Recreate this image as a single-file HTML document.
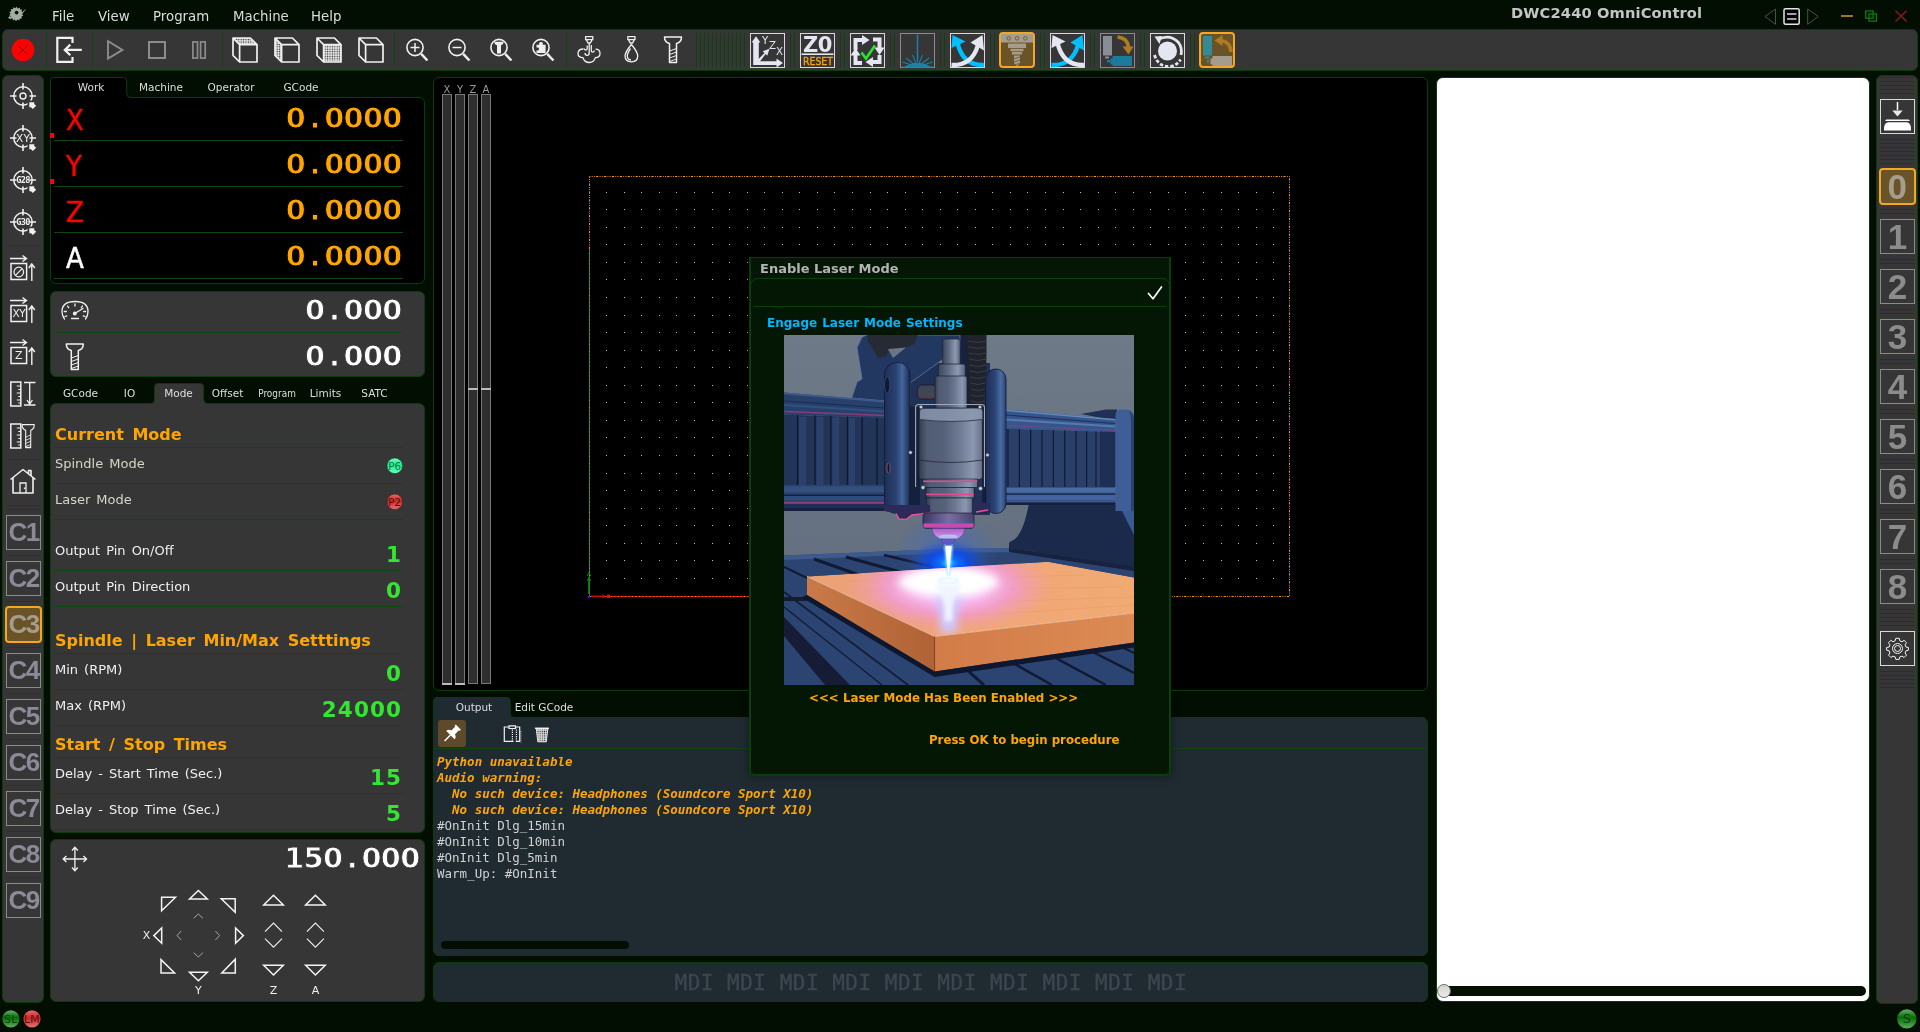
<!DOCTYPE html>
<html lang="en">
<head>
<meta charset="utf-8">
<title>DWC2440 OmniControl</title>
<style>
*{box-sizing:border-box;margin:0;padding:0}
html,body{width:1920px;height:1032px;overflow:hidden}
body{background:#020e02;font-family:"DejaVu Sans","Liberation Sans",sans-serif;color:#e6e6e6;position:relative;font-size:12px}
.abs{position:absolute}
.panel{position:absolute;background:#363636;border:1px solid #0c3c0c;border-radius:6px}
.black{background:#000}
.t{position:absolute;white-space:nowrap;line-height:1}
.menu{font-size:13.33px;color:#dcdcdc;top:9.5px}
.title{left:1511px;top:5.5px;font-size:14.67px;font-weight:bold;color:#c4c4c4;letter-spacing:.13px}
.tab{font-size:10.5px;color:#dedede;text-align:center}
.sep{position:absolute;height:1px;background:#0f460f}
.vsep{position:absolute;width:1px;background:#0f460f}
.hs{position:absolute;height:1px;background:#0c420c;left:1880px;width:34px}
.vs{position:absolute;width:1px;background:#0c420c;top:33px;height:34px}
.ib{position:absolute;width:35px;height:35px;border:1px solid #d8d8d8;background:#363636}
.ib.dim{border-color:#8a8a8a}
.ib.act{border:2px solid #f5a623;border-radius:4px;background:#6b5328;width:36px;height:36px}
.cb{position:absolute;left:6px;width:35px;height:35px;border:1px solid #8a8a8a;background:#363636;font-family:"Liberation Sans",sans-serif;font-weight:bold;font-size:26px;color:#8b8b97;text-align:center;line-height:33px;letter-spacing:-1.5px}
.cb.act{border:2px solid #f5a623;border-radius:4px;background:#6b5328;color:#a69c8c;left:5px;width:37px;height:37px;line-height:33px}
.nb{position:absolute;left:1880px;width:35px;height:35px;border:1px solid #8a8a8a;background:#363636;font-family:"Liberation Sans",sans-serif;font-weight:bold;font-size:35px;color:#8c8c8c;text-align:center;line-height:34px}
.nb.act{border:2px solid #f5a623;border-radius:4px;background:#6b5328;color:#a69c8c;left:1879px;width:36.5px;height:36.5px;line-height:33px}
.dro{font-weight:bold;font-size:28.8px;color:#ffa500;letter-spacing:-.7px;right:1518.4px;-webkit-text-stroke:.9px #000}
.dro i,.fd i,.jg i{font-style:normal;display:inline-block;text-align:center}
.dro i{width:19.2px}
.ax{font-size:29px;color:#ff0000;left:66px;font-stretch:condensed;-webkit-text-stroke:.45px currentColor}
.fd{font-weight:bold;font-size:28.8px;color:#fff;letter-spacing:-.7px;-webkit-text-stroke:.9px #363636}
.jg{font-weight:bold;font-size:28.8px;color:#fff;letter-spacing:-.7px;-webkit-text-stroke:.9px #363636}
.h{font-weight:bold;font-size:16px;color:#ffa500;left:55px;word-spacing:3px}
.l{font-size:13px;color:#f0f0f0;left:55px;word-spacing:1.9px}
.l.dimt{color:#d6d6c6}
.v{font-weight:bold;font-size:21.5px;color:#32e632;letter-spacing:1.1px}
.con{position:absolute;left:437px;top:753.8px;font-family:"DejaVu Sans Mono","Liberation Mono",monospace;font-size:12.5px;line-height:16px;white-space:pre;color:#d2d2d2}
.con b{color:#ffa500;font-style:oblique;font-weight:bold}
.mdi{font-family:"DejaVu Sans Mono","Liberation Mono",monospace;font-size:21px;color:#3d4650;left:674.5px;top:973px;letter-spacing:.5px;-webkit-text-stroke:.35px #3d4650}
svg{position:absolute;left:0;top:0;overflow:visible}
</style>
</head>
<body>
<div id="root" style="position:absolute;left:0;top:0;width:1920px;height:1032px;will-change:transform;transform:translateZ(0)">

<div class="t menu" style="left:52px">File</div>
<div class="t menu" style="left:98px">View</div>
<div class="t menu" style="left:153px">Program</div>
<div class="t menu" style="left:233px">Machine</div>
<div class="t menu" style="left:311px">Help</div>
<div class="t title">DWC2440 OmniControl</div>
<div class="panel" style="left:2px;top:29px;width:1916px;height:42px"></div>
<div class="panel" style="left:2px;top:75px;width:42px;height:928px"></div>
<div class="panel black" style="left:50px;top:97px;width:375px;height:187px;border-top-left-radius:0"></div>
<svg width="1920" height="1032"><path d="M50.5,99.0 V81.0 Q50.5,77.5 54.0,77.5 H123.2 Q126.7,77.5 126.7,81.0 V93.5 Q126.7,97.5 130.7,97.5 V99.1 H51.1 Z" fill="#000"/><path d="M50.5,99.0 V81.0 Q50.5,77.5 54.0,77.5 H123.2 Q126.7,77.5 126.7,81.0 V93.5 Q126.7,97.5 130.7,97.5" fill="none" stroke="#0c3c0c" stroke-width="1"/></svg>
<div class="t tab" style="left:51px;width:80px;top:82px">Work</div>
<div class="t tab" style="left:121px;width:80px;top:82px">Machine</div>
<div class="t tab" style="left:191px;width:80px;top:82px">Operator</div>
<div class="t tab" style="left:261px;width:80px;top:82px">GCode</div>
<div class="sep" style="left:54px;width:349px;top:140px"></div>
<div class="t ax" style="top:105.5px;color:#ff0000">X</div>
<div class="t dro" style="top:103.6px">0<i>.</i>0000</div>
<div class="sep" style="left:54px;width:349px;top:186px"></div>
<div class="t ax" style="top:151.5px;color:#ff0000">Y</div>
<div class="t dro" style="top:149.6px">0<i>.</i>0000</div>
<div class="sep" style="left:54px;width:349px;top:232px"></div>
<div class="t ax" style="top:197.5px;color:#ff0000">Z</div>
<div class="t dro" style="top:195.6px">0<i>.</i>0000</div>
<div class="sep" style="left:54px;width:349px;top:278px"></div>
<div class="t ax" style="top:243.5px;color:#ffffff">A</div>
<div class="t dro" style="top:241.6px">0<i>.</i>0000</div>
<div class="abs" style="left:50px;top:133px;width:4px;height:5px;background:#f00"></div>
<div class="abs" style="left:50px;top:179px;width:4px;height:5px;background:#f00"></div>
<div class="panel" style="left:50px;top:291px;width:375px;height:86px"></div>
<div class="sep" style="left:54px;width:349px;top:332px"></div>
<div class="t fd" style="right:1518.4px;top:296.1px">0<i style="width:19.2px">.</i>000</div>
<div class="t fd" style="right:1518.4px;top:342.1px">0<i style="width:19.2px">.</i>000</div>
<div class="panel" style="left:50px;top:403px;width:375px;height:430px"></div>
<svg width="1920" height="1032"><path d="M150.5,403.5 Q154.5,403.5 154.5,399.5 V387.0 Q154.5,383.5 158.0,383.5 H200.2 Q203.7,383.5 203.7,387.0 V399.5 Q203.7,403.5 207.7,403.5 V405.1 H150.5 Z" fill="#363636"/><path d="M150.5,403.5 Q154.5,403.5 154.5,399.5 V387.0 Q154.5,383.5 158.0,383.5 H200.2 Q203.7,383.5 203.7,387.0 V399.5 Q203.7,403.5 207.7,403.5" fill="none" stroke="#0c3c0c" stroke-width="1"/></svg>
<div class="t tab" style="left:40.5px;width:80px;top:388px">GCode</div>
<div class="t tab" style="left:89.5px;width:80px;top:388px">IO</div>
<div class="t tab" style="left:138.5px;width:80px;top:388px">Mode</div>
<div class="t tab" style="left:187.5px;width:80px;top:388px">Offset</div>
<div class="t tab" style="left:236.5px;width:80px;top:388px;transform:scaleX(.85)">Program</div>
<div class="t tab" style="left:285.5px;width:80px;top:388px">Limits</div>
<div class="t tab" style="left:334.5px;width:80px;top:388px">SATC</div>
<div class="t h" style="top:426.6px">Current Mode</div>
<div class="t h" style="top:632.6px">Spindle | Laser Min/Max Setttings</div>
<div class="t h" style="top:736.6px">Start / Stop Times</div>
<div class="sep" style="left:54px;width:349px;top:447px"></div>
<div class="sep" style="left:54px;width:349px;top:483px"></div>
<div class="sep" style="left:54px;width:349px;top:519px"></div>
<div class="sep" style="left:54px;width:349px;top:570px"></div>
<div class="sep" style="left:54px;width:349px;top:606px"></div>
<div class="sep" style="left:54px;width:349px;top:653px"></div>
<div class="sep" style="left:54px;width:349px;top:689px"></div>
<div class="sep" style="left:54px;width:349px;top:725px"></div>
<div class="sep" style="left:54px;width:349px;top:757px"></div>
<div class="sep" style="left:54px;width:349px;top:793px"></div>
<div class="sep" style="left:54px;width:349px;top:829px"></div>
<div class="t l dimt" style="top:457px">Spindle Mode</div>
<div class="t l dimt" style="top:493px">Laser Mode</div>
<div class="t l" style="top:544px">Output Pin On/Off</div>
<div class="t v" style="right:1517.9px;top:543.5px">1</div>
<div class="t l" style="top:580px">Output Pin Direction</div>
<div class="t v" style="right:1517.9px;top:579.5px">0</div>
<div class="t l" style="top:663px">Min (RPM)</div>
<div class="t v" style="right:1517.9px;top:662.5px">0</div>
<div class="t l" style="top:699px">Max (RPM)</div>
<div class="t v" style="right:1517.9px;top:698.5px">24000</div>
<div class="t l" style="top:767px">Delay - Start Time (Sec.)</div>
<div class="t v" style="right:1517.9px;top:766.5px">15</div>
<div class="t l" style="top:803px">Delay - Stop Time (Sec.)</div>
<div class="t v" style="right:1517.9px;top:802.5px">5</div>
<div class="panel" style="left:50px;top:839px;width:375px;height:163px"></div>
<div class="t jg" style="right:1500.5px;top:843.6px">150<i style="width:19.2px">.</i>000</div>
<div class="t" style="left:136.5px;width:20px;text-align:center;top:930.0px;font-size:11px;color:#f0f0f0">X</div>
<div class="t" style="left:188.3px;width:20px;text-align:center;top:985.0px;font-size:11px;color:#f0f0f0">Y</div>
<div class="t" style="left:263.5px;width:20px;text-align:center;top:985.0px;font-size:11px;color:#f0f0f0">Z</div>
<div class="t" style="left:305.4px;width:20px;text-align:center;top:985.0px;font-size:11px;color:#f0f0f0">A</div>
<div class="panel black" style="left:433px;top:77px;width:995px;height:614px"></div>
<div class="t" style="left:437px;width:20px;text-align:center;top:85px;font-size:10px;color:#9a9a9a">X</div>
<div class="t" style="left:450px;width:20px;text-align:center;top:85px;font-size:10px;color:#9a9a9a">Y</div>
<div class="t" style="left:463px;width:20px;text-align:center;top:85px;font-size:10px;color:#9a9a9a">Z</div>
<div class="t" style="left:476px;width:20px;text-align:center;top:85px;font-size:10px;color:#9a9a9a">A</div>
<svg width="1920" height="1032">
<g fill="#2e2e2e" stroke="#787878" stroke-width="1"><rect x="442.5" y="94.5" width="9" height="589"/><rect x="455.5" y="94.5" width="9" height="589"/><rect x="468.5" y="94.5" width="9" height="589"/><rect x="481.5" y="94.5" width="9" height="589"/></g>
<g fill="#bcbcbc"><rect x="442" y="683" width="10" height="2"/><rect x="455" y="683" width="10" height="2"/><rect x="468" y="388" width="10" height="2"/><rect x="481" y="388" width="10" height="2"/></g>
<path fill="#c2c2c2" shape-rendering="crispEdges" d="M606 578h1v1h-1zM624 578h1v1h-1zM641 578h1v1h-1zM659 578h1v1h-1zM676 578h1v1h-1zM694 578h1v1h-1zM712 578h1v1h-1zM729 578h1v1h-1zM747 578h1v1h-1zM1185 578h1v1h-1zM1203 578h1v1h-1zM1221 578h1v1h-1zM1238 578h1v1h-1zM1256 578h1v1h-1zM1273 578h1v1h-1zM606 560h1v1h-1zM624 560h1v1h-1zM641 560h1v1h-1zM659 560h1v1h-1zM676 560h1v1h-1zM694 560h1v1h-1zM712 560h1v1h-1zM729 560h1v1h-1zM747 560h1v1h-1zM1185 560h1v1h-1zM1203 560h1v1h-1zM1221 560h1v1h-1zM1238 560h1v1h-1zM1256 560h1v1h-1zM1273 560h1v1h-1zM606 543h1v1h-1zM624 543h1v1h-1zM641 543h1v1h-1zM659 543h1v1h-1zM676 543h1v1h-1zM694 543h1v1h-1zM712 543h1v1h-1zM729 543h1v1h-1zM747 543h1v1h-1zM1185 543h1v1h-1zM1203 543h1v1h-1zM1221 543h1v1h-1zM1238 543h1v1h-1zM1256 543h1v1h-1zM1273 543h1v1h-1zM606 525h1v1h-1zM624 525h1v1h-1zM641 525h1v1h-1zM659 525h1v1h-1zM676 525h1v1h-1zM694 525h1v1h-1zM712 525h1v1h-1zM729 525h1v1h-1zM747 525h1v1h-1zM1185 525h1v1h-1zM1203 525h1v1h-1zM1221 525h1v1h-1zM1238 525h1v1h-1zM1256 525h1v1h-1zM1273 525h1v1h-1zM606 508h1v1h-1zM624 508h1v1h-1zM641 508h1v1h-1zM659 508h1v1h-1zM676 508h1v1h-1zM694 508h1v1h-1zM712 508h1v1h-1zM729 508h1v1h-1zM747 508h1v1h-1zM1185 508h1v1h-1zM1203 508h1v1h-1zM1221 508h1v1h-1zM1238 508h1v1h-1zM1256 508h1v1h-1zM1273 508h1v1h-1zM606 490h1v1h-1zM624 490h1v1h-1zM641 490h1v1h-1zM659 490h1v1h-1zM676 490h1v1h-1zM694 490h1v1h-1zM712 490h1v1h-1zM729 490h1v1h-1zM747 490h1v1h-1zM1185 490h1v1h-1zM1203 490h1v1h-1zM1221 490h1v1h-1zM1238 490h1v1h-1zM1256 490h1v1h-1zM1273 490h1v1h-1zM606 473h1v1h-1zM624 473h1v1h-1zM641 473h1v1h-1zM659 473h1v1h-1zM676 473h1v1h-1zM694 473h1v1h-1zM712 473h1v1h-1zM729 473h1v1h-1zM747 473h1v1h-1zM1185 473h1v1h-1zM1203 473h1v1h-1zM1221 473h1v1h-1zM1238 473h1v1h-1zM1256 473h1v1h-1zM1273 473h1v1h-1zM606 455h1v1h-1zM624 455h1v1h-1zM641 455h1v1h-1zM659 455h1v1h-1zM676 455h1v1h-1zM694 455h1v1h-1zM712 455h1v1h-1zM729 455h1v1h-1zM747 455h1v1h-1zM1185 455h1v1h-1zM1203 455h1v1h-1zM1221 455h1v1h-1zM1238 455h1v1h-1zM1256 455h1v1h-1zM1273 455h1v1h-1zM606 437h1v1h-1zM624 437h1v1h-1zM641 437h1v1h-1zM659 437h1v1h-1zM676 437h1v1h-1zM694 437h1v1h-1zM712 437h1v1h-1zM729 437h1v1h-1zM747 437h1v1h-1zM1185 437h1v1h-1zM1203 437h1v1h-1zM1221 437h1v1h-1zM1238 437h1v1h-1zM1256 437h1v1h-1zM1273 437h1v1h-1zM606 420h1v1h-1zM624 420h1v1h-1zM641 420h1v1h-1zM659 420h1v1h-1zM676 420h1v1h-1zM694 420h1v1h-1zM712 420h1v1h-1zM729 420h1v1h-1zM747 420h1v1h-1zM1185 420h1v1h-1zM1203 420h1v1h-1zM1221 420h1v1h-1zM1238 420h1v1h-1zM1256 420h1v1h-1zM1273 420h1v1h-1zM606 402h1v1h-1zM624 402h1v1h-1zM641 402h1v1h-1zM659 402h1v1h-1zM676 402h1v1h-1zM694 402h1v1h-1zM712 402h1v1h-1zM729 402h1v1h-1zM747 402h1v1h-1zM1185 402h1v1h-1zM1203 402h1v1h-1zM1221 402h1v1h-1zM1238 402h1v1h-1zM1256 402h1v1h-1zM1273 402h1v1h-1zM606 385h1v1h-1zM624 385h1v1h-1zM641 385h1v1h-1zM659 385h1v1h-1zM676 385h1v1h-1zM694 385h1v1h-1zM712 385h1v1h-1zM729 385h1v1h-1zM747 385h1v1h-1zM1185 385h1v1h-1zM1203 385h1v1h-1zM1221 385h1v1h-1zM1238 385h1v1h-1zM1256 385h1v1h-1zM1273 385h1v1h-1zM606 367h1v1h-1zM624 367h1v1h-1zM641 367h1v1h-1zM659 367h1v1h-1zM676 367h1v1h-1zM694 367h1v1h-1zM712 367h1v1h-1zM729 367h1v1h-1zM747 367h1v1h-1zM1185 367h1v1h-1zM1203 367h1v1h-1zM1221 367h1v1h-1zM1238 367h1v1h-1zM1256 367h1v1h-1zM1273 367h1v1h-1zM606 350h1v1h-1zM624 350h1v1h-1zM641 350h1v1h-1zM659 350h1v1h-1zM676 350h1v1h-1zM694 350h1v1h-1zM712 350h1v1h-1zM729 350h1v1h-1zM747 350h1v1h-1zM1185 350h1v1h-1zM1203 350h1v1h-1zM1221 350h1v1h-1zM1238 350h1v1h-1zM1256 350h1v1h-1zM1273 350h1v1h-1zM606 332h1v1h-1zM624 332h1v1h-1zM641 332h1v1h-1zM659 332h1v1h-1zM676 332h1v1h-1zM694 332h1v1h-1zM712 332h1v1h-1zM729 332h1v1h-1zM747 332h1v1h-1zM1185 332h1v1h-1zM1203 332h1v1h-1zM1221 332h1v1h-1zM1238 332h1v1h-1zM1256 332h1v1h-1zM1273 332h1v1h-1zM606 315h1v1h-1zM624 315h1v1h-1zM641 315h1v1h-1zM659 315h1v1h-1zM676 315h1v1h-1zM694 315h1v1h-1zM712 315h1v1h-1zM729 315h1v1h-1zM747 315h1v1h-1zM1185 315h1v1h-1zM1203 315h1v1h-1zM1221 315h1v1h-1zM1238 315h1v1h-1zM1256 315h1v1h-1zM1273 315h1v1h-1zM606 297h1v1h-1zM624 297h1v1h-1zM641 297h1v1h-1zM659 297h1v1h-1zM676 297h1v1h-1zM694 297h1v1h-1zM712 297h1v1h-1zM729 297h1v1h-1zM747 297h1v1h-1zM1185 297h1v1h-1zM1203 297h1v1h-1zM1221 297h1v1h-1zM1238 297h1v1h-1zM1256 297h1v1h-1zM1273 297h1v1h-1zM606 279h1v1h-1zM624 279h1v1h-1zM641 279h1v1h-1zM659 279h1v1h-1zM676 279h1v1h-1zM694 279h1v1h-1zM712 279h1v1h-1zM729 279h1v1h-1zM747 279h1v1h-1zM1185 279h1v1h-1zM1203 279h1v1h-1zM1221 279h1v1h-1zM1238 279h1v1h-1zM1256 279h1v1h-1zM1273 279h1v1h-1zM606 262h1v1h-1zM624 262h1v1h-1zM641 262h1v1h-1zM659 262h1v1h-1zM676 262h1v1h-1zM694 262h1v1h-1zM712 262h1v1h-1zM729 262h1v1h-1zM747 262h1v1h-1zM1185 262h1v1h-1zM1203 262h1v1h-1zM1221 262h1v1h-1zM1238 262h1v1h-1zM1256 262h1v1h-1zM1273 262h1v1h-1zM606 244h1v1h-1zM624 244h1v1h-1zM641 244h1v1h-1zM659 244h1v1h-1zM676 244h1v1h-1zM694 244h1v1h-1zM712 244h1v1h-1zM729 244h1v1h-1zM747 244h1v1h-1zM764 244h1v1h-1zM782 244h1v1h-1zM799 244h1v1h-1zM817 244h1v1h-1zM834 244h1v1h-1zM852 244h1v1h-1zM870 244h1v1h-1zM887 244h1v1h-1zM905 244h1v1h-1zM922 244h1v1h-1zM940 244h1v1h-1zM957 244h1v1h-1zM975 244h1v1h-1zM992 244h1v1h-1zM1010 244h1v1h-1zM1027 244h1v1h-1zM1045 244h1v1h-1zM1063 244h1v1h-1zM1080 244h1v1h-1zM1098 244h1v1h-1zM1115 244h1v1h-1zM1133 244h1v1h-1zM1150 244h1v1h-1zM1168 244h1v1h-1zM1185 244h1v1h-1zM1203 244h1v1h-1zM1221 244h1v1h-1zM1238 244h1v1h-1zM1256 244h1v1h-1zM1273 244h1v1h-1zM606 227h1v1h-1zM624 227h1v1h-1zM641 227h1v1h-1zM659 227h1v1h-1zM676 227h1v1h-1zM694 227h1v1h-1zM712 227h1v1h-1zM729 227h1v1h-1zM747 227h1v1h-1zM764 227h1v1h-1zM782 227h1v1h-1zM799 227h1v1h-1zM817 227h1v1h-1zM834 227h1v1h-1zM852 227h1v1h-1zM870 227h1v1h-1zM887 227h1v1h-1zM905 227h1v1h-1zM922 227h1v1h-1zM940 227h1v1h-1zM957 227h1v1h-1zM975 227h1v1h-1zM992 227h1v1h-1zM1010 227h1v1h-1zM1027 227h1v1h-1zM1045 227h1v1h-1zM1063 227h1v1h-1zM1080 227h1v1h-1zM1098 227h1v1h-1zM1115 227h1v1h-1zM1133 227h1v1h-1zM1150 227h1v1h-1zM1168 227h1v1h-1zM1185 227h1v1h-1zM1203 227h1v1h-1zM1221 227h1v1h-1zM1238 227h1v1h-1zM1256 227h1v1h-1zM1273 227h1v1h-1zM606 209h1v1h-1zM624 209h1v1h-1zM641 209h1v1h-1zM659 209h1v1h-1zM676 209h1v1h-1zM694 209h1v1h-1zM712 209h1v1h-1zM729 209h1v1h-1zM747 209h1v1h-1zM764 209h1v1h-1zM782 209h1v1h-1zM799 209h1v1h-1zM817 209h1v1h-1zM834 209h1v1h-1zM852 209h1v1h-1zM870 209h1v1h-1zM887 209h1v1h-1zM905 209h1v1h-1zM922 209h1v1h-1zM940 209h1v1h-1zM957 209h1v1h-1zM975 209h1v1h-1zM992 209h1v1h-1zM1010 209h1v1h-1zM1027 209h1v1h-1zM1045 209h1v1h-1zM1063 209h1v1h-1zM1080 209h1v1h-1zM1098 209h1v1h-1zM1115 209h1v1h-1zM1133 209h1v1h-1zM1150 209h1v1h-1zM1168 209h1v1h-1zM1185 209h1v1h-1zM1203 209h1v1h-1zM1221 209h1v1h-1zM1238 209h1v1h-1zM1256 209h1v1h-1zM1273 209h1v1h-1zM606 192h1v1h-1zM624 192h1v1h-1zM641 192h1v1h-1zM659 192h1v1h-1zM676 192h1v1h-1zM694 192h1v1h-1zM712 192h1v1h-1zM729 192h1v1h-1zM747 192h1v1h-1zM764 192h1v1h-1zM782 192h1v1h-1zM799 192h1v1h-1zM817 192h1v1h-1zM834 192h1v1h-1zM852 192h1v1h-1zM870 192h1v1h-1zM887 192h1v1h-1zM905 192h1v1h-1zM922 192h1v1h-1zM940 192h1v1h-1zM957 192h1v1h-1zM975 192h1v1h-1zM992 192h1v1h-1zM1010 192h1v1h-1zM1027 192h1v1h-1zM1045 192h1v1h-1zM1063 192h1v1h-1zM1080 192h1v1h-1zM1098 192h1v1h-1zM1115 192h1v1h-1zM1133 192h1v1h-1zM1150 192h1v1h-1zM1168 192h1v1h-1zM1185 192h1v1h-1zM1203 192h1v1h-1zM1221 192h1v1h-1zM1238 192h1v1h-1zM1256 192h1v1h-1zM1273 192h1v1h-1z"/>
<path d="M589.5,596.5 V176.5 H1289.5 V596.5 H589.5" fill="none" stroke="#ff9a00" stroke-width="1" stroke-dasharray="2.2 1.3 .9 1.3 .9 1.3"/>
<path d="M589.5,249.5 V596" stroke="#1f8c1f" stroke-width="1" fill="none"/>
<path d="M589.5,249.5 V596" stroke="#e08a00" stroke-width="1" stroke-dasharray=".9 2.6" fill="none"/>
<path d="M590,596.5 H1000" stroke="#e01010" stroke-width="1" fill="none"/>
<path d="M590,596.5 H1000" stroke="#ffa000" stroke-width="1" stroke-dasharray=".9 2.6" fill="none"/>
<path d="M589,594 V578" stroke="#0f8a0f" stroke-width="1.700"/><path d="M587.300,580.800 L589,577 L590.700,580.800 M587.300,576 L589,572.200 L590.700,576" stroke="#0f8a0f" stroke-width=".9" fill="none"/>
<path d="M591,596.300 H603" stroke="#c81010" stroke-width="1.500"/><path d="M602,594.600 L605.500,596.300 L602,598" stroke="#c81010" stroke-width=".9" fill="none"/><rect x="607" y="594.600" width="3.400" height="3.400" fill="#d81414"/>
<circle cx="588.800" cy="597" r="1.500" fill="#1020d0"/>
</svg>

<div class="panel" style="left:433px;top:717px;width:995px;height:239px;background:#1f2a31;border-top-left-radius:0"></div>
<svg width="1920" height="1032"><path d="M433.5,719.0 V701.0 Q433.5,697.5 437.0,697.5 H506.8 Q510.3,697.5 510.3,701.0 V713.5 Q510.3,717.5 514.3,717.5 V719.1 H434.1 Z" fill="#1f2a31"/><path d="M433.5,719.0 V701.0 Q433.5,697.5 437.0,697.5 H506.8 Q510.3,697.5 510.3,701.0 V713.5 Q510.3,717.5 514.3,717.5" fill="none" stroke="#0c3c0c" stroke-width="1"/></svg>
<div class="t tab" style="left:434px;width:80px;top:702px">Output</div>
<div class="t tab" style="left:504px;width:80px;top:702px">Edit GCode</div>
<div class="sep" style="left:434px;width:993px;top:748px"></div>
<div class="abs" style="left:438px;top:720px;width:28px;height:27px;background:#5e4a2a;border-radius:3px"></div>
<div class="con"><b>Python unavailable</b>
<b>Audio warning:</b>
<b>  No such device: Headphones (Soundcore Sport X10)</b>
<b>  No such device: Headphones (Soundcore Sport X10)</b>
#OnInit Dlg_15min
#OnInit Dlg_10min
#OnInit Dlg_5min
Warm_Up: #OnInit</div>
<div class="abs" style="left:441px;top:941px;width:188px;height:8px;border-radius:4px;background:#020e02"></div>
<div class="panel" style="left:433px;top:962px;width:995px;height:40px;background:#1f2a31"></div>
<div class="t mdi">MDI MDI MDI MDI MDI MDI MDI MDI MDI MDI</div>
<div class="panel" style="left:1436px;top:77px;width:434px;height:925px;background:#fff;border-color:#0c3c0c;border-radius:7px"></div>
<div class="abs" style="left:1439px;top:986px;width:427px;height:9.6px;border-radius:5px;background:#031003"></div>
<div class="abs" style="left:1437px;top:984px;width:13.6px;height:13.6px;border-radius:7px;background:linear-gradient(#d2d2d2,#ececec);border:1px solid #6e6e6e"></div>
<div class="panel" style="left:1876px;top:75px;width:42px;height:929px"></div>
<div class="hs" style="top:77px"></div>
<div class="hs" style="top:81px"></div>
<div class="hs" style="top:85px"></div>
<div class="hs" style="top:89px"></div>
<div class="hs" style="top:93px"></div>
<div class="ib" style="left:1880px;top:99px"></div>
<div class="hs" style="top:139px"></div>
<div class="hs" style="top:143px"></div>
<div class="hs" style="top:147px"></div>
<div class="hs" style="top:151px"></div>
<div class="hs" style="top:155px"></div>
<div class="hs" style="top:159px"></div>
<div class="hs" style="top:163px"></div>
<div class="nb act" style="top:168px">0</div>
<div class="hs" style="top:209px"></div>
<div class="hs" style="top:213px"></div>
<div class="nb" style="top:219px">1</div>
<div class="hs" style="top:259px"></div>
<div class="hs" style="top:263px"></div>
<div class="nb" style="top:269px">2</div>
<div class="hs" style="top:309px"></div>
<div class="hs" style="top:313px"></div>
<div class="nb" style="top:319px">3</div>
<div class="hs" style="top:359px"></div>
<div class="hs" style="top:363px"></div>
<div class="nb" style="top:369px">4</div>
<div class="hs" style="top:409px"></div>
<div class="hs" style="top:413px"></div>
<div class="nb" style="top:419px">5</div>
<div class="hs" style="top:459px"></div>
<div class="hs" style="top:463px"></div>
<div class="nb" style="top:469px">6</div>
<div class="hs" style="top:509px"></div>
<div class="hs" style="top:513px"></div>
<div class="nb" style="top:519px">7</div>
<div class="hs" style="top:559px"></div>
<div class="hs" style="top:563px"></div>
<div class="nb" style="top:569px">8</div>
<div class="hs" style="top:609px"></div>
<div class="hs" style="top:613px"></div>
<div class="hs" style="top:617px"></div>
<div class="hs" style="top:621px"></div>
<div class="hs" style="top:625px"></div>
<div class="ib" style="left:1880px;top:631px"></div>
<div class="hs" style="top:671px"></div>
<div class="hs" style="top:675px"></div>
<div class="hs" style="top:679px"></div>
<div class="hs" style="top:683px"></div>
<div class="hs" style="top:687px"></div>
<div class="sep" style="left:6px;width:34px;top:245px"></div>
<div class="sep" style="left:6px;width:34px;top:459px"></div>
<div class="sep" style="left:6px;width:34px;top:505px"></div>
<div class="sep" style="left:6px;width:34px;top:509px"></div>
<div class="cb" style="top:515px">C1</div>
<div class="sep" style="left:6px;width:34px;top:555px"></div>
<div class="cb" style="top:561px">C2</div>
<div class="sep" style="left:6px;width:34px;top:601px"></div>
<div class="cb act" style="top:606px">C3</div>
<div class="sep" style="left:6px;width:34px;top:647px"></div>
<div class="cb" style="top:653px">C4</div>
<div class="sep" style="left:6px;width:34px;top:693px"></div>
<div class="cb" style="top:699px">C5</div>
<div class="sep" style="left:6px;width:34px;top:739px"></div>
<div class="cb" style="top:745px">C6</div>
<div class="sep" style="left:6px;width:34px;top:785px"></div>
<div class="cb" style="top:791px">C7</div>
<div class="sep" style="left:6px;width:34px;top:831px"></div>
<div class="cb" style="top:837px">C8</div>
<div class="sep" style="left:6px;width:34px;top:877px"></div>
<div class="cb" style="top:883px">C9</div>
<div class="vsep" style="left:46px;top:33px;height:34px"></div>
<div class="vsep" style="left:92px;top:33px;height:34px"></div>
<div class="vsep" style="left:222px;top:33px;height:34px"></div>
<div class="vsep" style="left:394px;top:33px;height:34px"></div>
<div class="vsep" style="left:566px;top:33px;height:34px"></div>
<div class="vs" style="left:696px"></div>
<div class="vs" style="left:700px"></div>
<div class="vs" style="left:704px"></div>
<div class="vs" style="left:708px"></div>
<div class="vs" style="left:712px"></div>
<div class="vs" style="left:716px"></div>
<div class="vs" style="left:720px"></div>
<div class="vs" style="left:724px"></div>
<div class="vs" style="left:728px"></div>
<div class="vs" style="left:732px"></div>
<div class="vs" style="left:736px"></div>
<div class="vs" style="left:740px"></div>
<div class="vs" style="left:744px"></div>
<div class="ib " style="left:750px;top:33px"></div>
<div class="vs" style="left:790px"></div><div class="vs" style="left:794px"></div>
<div class="ib " style="left:800px;top:33px"></div>
<div class="vs" style="left:840px"></div><div class="vs" style="left:844px"></div>
<div class="ib " style="left:850px;top:33px"></div>
<div class="vs" style="left:890px"></div><div class="vs" style="left:894px"></div>
<div class="ib dim" style="left:900px;top:33px"></div>
<div class="vs" style="left:940px"></div><div class="vs" style="left:944px"></div>
<div class="ib " style="left:950px;top:33px"></div>
<div class="vs" style="left:990px"></div><div class="vs" style="left:994px"></div>
<div class="ib act" style="left:999px;top:32px"></div>
<div class="vs" style="left:1040px"></div><div class="vs" style="left:1044px"></div>
<div class="ib " style="left:1050px;top:33px"></div>
<div class="vs" style="left:1090px"></div><div class="vs" style="left:1094px"></div>
<div class="ib dim" style="left:1100px;top:33px"></div>
<div class="vs" style="left:1140px"></div><div class="vs" style="left:1144px"></div>
<div class="ib " style="left:1150px;top:33px"></div>
<div class="vs" style="left:1190px"></div><div class="vs" style="left:1194px"></div>
<div class="ib act" style="left:1199px;top:32px"></div>
<div class="t" style="left:762px;top:35px;font-size:10.3px;color:#e4e6f2;z-index:3">Y</div>
<div class="t" style="left:769px;top:39.5px;font-size:10.3px;color:#e4e6f2;z-index:3">Z</div>
<div class="t" style="left:776px;top:46px;font-size:10.3px;color:#e4e6f2;z-index:3">X</div>
<div class="t" style="left:802px;top:35.2px;width:31px;text-align:center;font-size:21px;font-weight:bold;color:#e4e6f2;z-index:3;letter-spacing:-.5px">Z0</div>
<div class="t" style="left:797.5px;top:55.6px;width:40px;text-align:center;font-size:10.4px;color:#ffa500;z-index:3;transform:scaleX(.9);-webkit-text-stroke:.3px #ffa500">RESET</div>
<svg width="1920" height="1032" id="icons">
<defs>
<pattern id="hatch" width="2.4" height="2.4" patternUnits="userSpaceOnUse"><rect width="2.4" height="2.4" fill="#eee"/><circle cx="1.2" cy="1.2" r=".75" fill="#363636"/></pattern>
<g id="cube"><path d="M7.6,7.6 H25 V25 H7.6 Z M7.6,7.6 L1,1 H18.4 L25,7.6 M1,1 V18.4 L7.6,25" fill="none" stroke="#f0f0f0" stroke-width="1.7" stroke-linejoin="round"/></g>
<g id="mag"><circle cx="0" cy="0" r="8.1" fill="none" stroke="#f0f0f0" stroke-width="1.6"/><path d="M6.2,6.4 L12.4,13" stroke="#f0f0f0" stroke-width="2.5"/></g>
<g id="xh"><circle cx="0" cy="0" r="9.2" fill="none" stroke="#f0f0f0" stroke-width="1.5"/><path d="M0,-13 V-6.5 M0,6.5 V13 M-13,0 H-6.5 M6.5,0 H13" stroke="#f0f0f0" stroke-width="1.6"/><rect x="4.5" y="4.5" width="10" height="10" fill="#363636"/><path d="M6.3,6.2 H11.2 V8 L13.2,9.8 L9.8,13 L8,11.2 H6.3 Z" fill="#f0f0f0"/></g>
<g id="boxar"><path d="M-13,-12 H3 M-0.5,-15 L3.5,-12 L-0.5,-9" fill="none" stroke="#f0f0f0" stroke-width="1.4"/><rect x="-12" y="-7" width="15.6" height="16" fill="none" stroke="#f0f0f0" stroke-width="1.5"/><path d="M8.8,10.5 V-5 M5.8,-2.5 L8.8,-6.5 L11.8,-2.5" fill="none" stroke="#f0f0f0" stroke-width="1.4"/></g>
<g id="ruler"><rect x="0" y="0" width="10" height="24" fill="none" stroke="#f0f0f0" stroke-width="1.5"/><path d="M10,4 H6 M10,7.5 H7.5 M10,11 H6 M10,14.5 H7.5 M10,18 H6 M10,21 H7.5" stroke="#f0f0f0" stroke-width="1"/></g>
<g id="bolt"><path d="M-8.5,-13 H8.5 Q8.5,-8 3.5,-6.5 V12.5 H-3.5 V-6.5 Q-8.5,-8 -8.5,-13 Z" fill="none" stroke="#f0f0f0" stroke-width="1.5" stroke-linejoin="round"/><path d="M-3.5,1 L3.5,-1.5 M-3.5,4.5 L3.5,2 M-3.5,8 L3.5,5.5 M-3.5,11.5 L3.5,9" stroke="#f0f0f0" stroke-width="1"/></g>
</defs>
<!-- logo -->
<g fill="#a4aca4"><path d="M16.6,6.8 l1.2,1.6 1.9,-.9 .3,2 2.1,.1 -.6,2 1.9,1 -1.4,1.5 1.3,1.7 -1.9,.8 .4,2.1 -2.1,-.1 -.5,2 -1.8,-1 -1.4,1.6 -1.2,-1.7 -1.9,.9 -.3,-2.1 -2.1,-.1 .6,-2 -1.9,-1 1.4,-1.5 -1.3,-1.7 1.9,-.8 -.4,-2.1 2.1,.1 .5,-2 1.8,1 z"/><path d="M8,17.8 l2.4,-2.2 .2,1.5 q6,1 14.5,-7.6 l1,-.3 q-7,9.500 -15.600,9.400 l.3,1z"/></g><circle cx="16.6" cy="12.6" r="1.9" fill="#020e02"/>
<!-- window controls -->
<g fill="none"><path d="M1775.5,9 V24.3 L1765,16.5 Z" stroke="#4c504c" stroke-width="1"/><path d="M1807.700,9 V24.3 L1818.200,16.500 Z" stroke="#4c504c" stroke-width="1"/>
<rect x="1784" y="8.8" width="15.2" height="15.400" rx="1.5" fill="#000" stroke="#e4e4e4" stroke-width="1.5"/><path d="M1787,14 H1796.400 M1787,18.900 H1796.400" stroke="#d8d8d8" stroke-width="1.5"/>
<path d="M1841,16 H1853" stroke="#9a7a1e" stroke-width="2"/>
<rect x="1865.700" y="11" width="7.400" height="7.200" stroke="#0f7a0f" stroke-width="1.300"/><rect x="1869" y="13.900" width="7.400" height="7.200" stroke="#0f7a0f" stroke-width="1.300"/>
<path d="M1895.500,10.700 L1906.600,21.400 M1906.600,10.700 L1895.500,21.400" stroke="#8b1c1c" stroke-width="1.400"/></g>
<!-- estop -->
<circle cx="23" cy="50" r="11.3" fill="#ff0000"/><path d="M18.5,45.500 L27.500,54.500 M27.500,45.500 L18.500,54.500" stroke="#8c0000" stroke-width="1"/>
<!-- exit -->
<path d="M72.500,43 V37.900 H57.300 V61.900 H72.500 V57" fill="none" stroke="#f0f0f0" stroke-width="2.200"/><path d="M81.800,49.900 H65 M70.300,44.600 L64.800,49.900 L70.300,55.200" fill="none" stroke="#f0f0f0" stroke-width="2.200"/>
<!-- play stop pause -->
<g fill="none" stroke="#8c8c8c"><path d="M108,41.200 V58.600 L122.500,49.900 Z" stroke-width="1.900"/><rect x="149" y="42" width="16" height="16" stroke-width="2"/><rect x="192.900" y="41.900" width="4.600" height="16.200" stroke-width="1.700"/><rect x="200.600" y="41.900" width="4.600" height="16.200" stroke-width="1.700"/></g>
<!-- cubes -->
<polygon points="233,38 250.400,38 257,44.600 239.600,44.600" fill="url(#hatch)"/><use href="#cube" x="232" y="37"/>
<polygon points="275,38 281.600,44.600 281.600,62 275,55.400" fill="url(#hatch)"/><use href="#cube" x="274" y="37"/>
<rect x="323.600" y="44.600" width="17.400" height="17.400" fill="url(#hatch)"/><use href="#cube" x="316" y="37"/>
<use href="#cube" x="358" y="37"/>
<!-- magnifiers -->
<use href="#mag" x="415" y="47.500"/><path d="M410.500,47.500 H419.500 M415,43 V52" stroke="#f0f0f0" stroke-width="1.500"/>
<use href="#mag" x="457" y="47.500"/><path d="M452.500,47.500 H461.500" stroke="#f0f0f0" stroke-width="1.500"/>
<use href="#mag" x="499" y="47.500"/><path d="M494.300,41.800 H503.700 Q503.700,44.600 501,45.300 V53.500 H497 V45.300 Q494.300,44.600 494.300,41.800Z" fill="#f0f0f0"/>
<use href="#mag" x="541" y="47.500"/><path d="M536.500,44.800 H539.300 Q538.500,42 541,42 Q543.500,42 542.700,44.800 H545.600 V53 H536.500 V50.300 Q539,51 539,48.900 Q539,46.900 536.500,47.600Z" fill="#f0f0f0"/>
<!-- mist -->
<g fill="none" stroke="#f0f0f0" stroke-width="1.300" stroke-linejoin="round"><path d="M585.600,36.700 H592.800 V39.600 H585.600 Z M586.300,39.600 L588,43 H590.400 L592.100,39.600"/><path d="M589.200,43 V53 Q589.200,55.300 587.200,55.300 Q585,55.300 585,53 M587.200,45.500 V48.500 Q587.200,50 585.700,50 Q584.300,50 584.300,48.500 M591.300,45 V50.500 Q591.300,52.200 592.800,52.200 Q594.300,52.200 594.300,50.500"/><path d="M583.500,49 Q578,49 578,53.500 Q578,57.500 583,57.700 Q584.500,62.500 589.300,62.500 Q594,62.500 595.300,57.700 Q600,57.500 600,53.500 Q600,49.300 595.500,49.200"/></g>
<!-- drop -->
<g fill="none" stroke="#f0f0f0" stroke-width="1.300" stroke-linejoin="round"><path d="M627.800,36.700 H635 V39.600 H627.800 Z M628.500,39.600 L630.200,43 H632.600 L634.300,39.600"/><path d="M631.400,44.500 Q637.700,52 637.700,56 Q637.700,61.800 631.400,61.800 Q625.100,61.800 625.100,56 Q625.100,52 631.400,44.500Z"/><path d="M630.500,48.500 Q627.300,53 627.300,56 Q627.300,59.500 631,60"/></g>
<!-- bolt -->
<use href="#bolt" x="673" y="50"/>

<!-- BIG ICONS -->
<!-- 1 axes (750..785, 33..68) -->
<g fill="#e4e6f2"><path d="M753.200,65 V42.500 H751.600 L756,36.200 L760.400,42.500 H758.800 V61.200 H776.500 V58.500 L783,63 L776.500,67.500 V65 Z"/><path d="M757,60.500 L764.500,53 L762.700,51.200 L769.500,48.800 L767.200,55.700 L765.600,54.100 L759.500,62 Z"/></g>
<!-- 2 Z0 RESET -->
<rect x="801.500" y="53.400" width="32" height="1.600" fill="#e4e6f2"/>
<!-- 3 cycle + check -->
<g fill="#e4e6f2"><path d="M853.500,50 V38 H862 V35 L869.500,40 L862,45 V42 H857.500 V50 Z"/><path d="M873,37.500 H881.500 V47.500 H884.500 L879.500,55 L874.500,47.500 H877.500 V41.500 H873 Z"/><path d="M881.500,55 V64 H873 V67 L865.500,62 L873,57 V60 H877.500 V55 Z"/><path d="M862,66 H853.500 V56.500 H850.500 L855.500,49 L860.500,56.500 H857.500 V62 H862 Z" transform="translate(0,-1)"/></g>
<path d="M861.500,52.500 L866,58.500 L875,45.500" fill="none" stroke="#28e628" stroke-width="2.600"/>
<!-- 4 laser -->
<g stroke="#1c80a4" fill="none"><path d="M917.500,34.500 V62" stroke-width="1.500"/><path d="M902,67 L933,67 M917.500,67 L906,58 M917.500,67 L929,58 M917.500,67 L912.500,55 M917.500,67 L922.500,55 M917.500,67 L902.500,62 M917.500,67 L932.500,62" stroke-width="1.100"/></g><path d="M903,67.500 Q917.500,58 932,67.500 Z" fill="#1c80a4"/>
<!-- 5 arrows blue-left white-right -->
<g fill="none"><path d="M984,65 Q963,66 957.500,43" stroke="#00bfff" stroke-width="4.400"/><polygon points="952.500,35 965.500,41.500 951.500,48" fill="#00bfff"/>
<path d="M951.500,65 Q972,66 978,45" stroke="#e4e6f2" stroke-width="4.400"/><polygon points="982.500,35 984,50.500 970.500,42.500" fill="#e4e6f2"/></g>
<!-- 6 spindle (active) -->
<rect x="1001" y="34" width="32" height="8.500" fill="#a69c8c"/><g fill="none" stroke="#6b5328" stroke-width=".8"><circle cx="1008.700" cy="38.300" r="1.800"/><circle cx="1017" cy="38.300" r="1.800"/><circle cx="1025.300" cy="38.300" r="1.800"/></g>
<g fill="#a69c8c"><rect x="1008" y="43.500" width="18" height="4.500"/><rect x="1010.500" y="48.800" width="13" height="2.500"/><path d="M1012,52 H1022 V54.500 H1012Z"/><path d="M1014,55.500 H1020 V63 L1017,66.500 L1014,63 Z"/></g><path d="M1014,59 L1020,57 M1014,62 L1020,60 M1015,65 L1019.500,63.300" stroke="#6b5328" stroke-width=".8"/>
<!-- 7 arrows white-left blue-right -->
<g fill="none"><path d="M1051.500,65 Q1072,66 1078,45" stroke="#00bfff" stroke-width="4.400"/><polygon points="1082.500,35 1084,50.500 1070.500,42.500" fill="#00bfff"/>
<path d="M1084,65 Q1063,66 1057.500,43" stroke="#e4e6f2" stroke-width="4.400"/><polygon points="1052.500,35 1065.500,41.500 1051.500,48" fill="#e4e6f2"/></g>
<!-- 8 spindle->laser dim -->
<rect x="1103" y="36" width="9" height="19.500" fill="#8a8c96"/><rect x="1105" y="56.500" width="4" height="2" fill="#8a8c96"/><rect x="1107" y="60" width="3" height="2.500" fill="#1c7a9c"/><rect x="1110.500" y="58.500" width="2.500" height="6" fill="#1c7a9c"/><rect x="1112.500" y="56" width="19.500" height="10" fill="#1c7a9c"/>
<path d="M1117.500,37 Q1128,38 1128.500,48" fill="none" stroke="#b07a1e" stroke-width="3.600"/><polygon points="1122.500,46.500 1133.500,46.500 1128.500,54.500" fill="#b07a1e"/>
<!-- 9 rotate -->
<circle cx="1167.500" cy="51" r="9.500" fill="#e4e6f2"/><path d="M1158,39.500 Q1170,33.500 1178.500,42.500 Q1182.500,48 1181,55" fill="none" stroke="#e4e6f2" stroke-width="2.800"/><polygon points="1154.500,36.500 1162,36 1159.500,44" fill="#e4e6f2"/><path d="M1154.500,55 Q1158,66.500 1169,66.500 Q1177,66 1180.500,59.500" fill="none" stroke="#e4e6f2" stroke-width="2.800" stroke-dasharray="3.400 1.900"/>
<!-- 10 laser->spindle active -->
<rect x="1203" y="36" width="9" height="19.500" fill="#358a96"/><rect x="1205" y="56.500" width="4" height="2" fill="#358a96"/><rect x="1207" y="60" width="2" height="2.500" fill="#358a96"/><rect x="1210.500" y="58.500" width="2.500" height="6" fill="#a69c8c"/><rect x="1212.500" y="56" width="19.500" height="10" fill="#a69c8c"/>
<path d="M1231,52 Q1230.500,42 1221,40.500" fill="none" stroke="#b07a1e" stroke-width="3.600"/><polygon points="1222.500,35 1222.500,46 1214.500,40.500" fill="#b07a1e"/>

<!-- LEFT SIDEBAR -->
<use href="#xh" x="23" y="96"/><circle cx="23" cy="96" r="3" fill="none" stroke="#f0f0f0" stroke-width="1.400"/>
<use href="#xh" x="23" y="138"/>
<use href="#xh" x="23" y="180"/>
<use href="#xh" x="23" y="222"/>
<use href="#boxar" x="23" y="270.500"/><circle cx="18.800" cy="272" r="4.800" fill="none" stroke="#f0f0f0" stroke-width="1.200"/><path d="M15.500,275.300 L22.100,268.700" stroke="#f0f0f0" stroke-width="1.200"/>
<use href="#boxar" x="23" y="312.500"/>
<use href="#boxar" x="23" y="354.500"/>
<use href="#ruler" x="10.800" y="382"/><path d="M24,382.500 H35.500 M24,405 H35.500 M29.700,383 V403.500 M27,400 L29.700,404 L32.400,400" fill="none" stroke="#f0f0f0" stroke-width="1.300"/>
<use href="#ruler" x="10.800" y="424"/><g transform="translate(28.200,436.300) scale(.72,.9)"><use href="#bolt"/></g>
<path d="M10.500,479.500 L23,469.500 L35.500,479.500 M13,478 V493 H33 V478 M28.500,473.500 V470.500 H31 V476" fill="none" stroke="#f0f0f0" stroke-width="1.600" stroke-linejoin="round"/><path d="M20,493 V483 H26 V493 M24.500,487.500 V489" fill="none" stroke="#f0f0f0" stroke-width="1.300"/>

<!-- RIGHT SIDEBAR -->
<path d="M1897.500,102 V110" stroke="#fff" stroke-width="1.500"/><path d="M1892.300,110.500 H1902.700 L1897.500,116.500 Z" fill="#e8e8e8"/><path d="M1886.500,119.500 H1908.500 Q1909.500,119.500 1909.800,121 H1885.200 Q1885.500,119.500 1886.500,119.500Z" fill="#fff"/><path d="M1884,130.500 Q1883.500,123 1888,122.300 H1907 Q1911.500,123 1911,130.500 Z" fill="#fff"/>
<g transform="translate(1897.500,648.500)" fill="none" stroke="#f4f4f4" stroke-width="1"><circle r="3"/><circle r="5"/><path d="M-1.700,-10.200 H1.700 L2.300,-7.700 L4.500,-6.700 L6.600,-8.200 L9,-5.800 L7.600,-3.700 L8.400,-1.500 L10.900,-1 V1.700 L8.400,2.300 L7.600,4.500 L9,6.600 L6.600,9 L4.500,7.600 L2.300,8.400 L1.700,10.900 H-1.700 L-2.300,8.400 L-4.500,7.600 L-6.600,9 L-9,6.600 L-7.600,4.500 L-8.400,2.300 L-10.900,1.700 V-1 L-8.400,-1.500 L-7.600,-3.700 L-9,-5.800 L-6.600,-8.200 L-4.500,-6.700 L-2.300,-7.700 Z" stroke-linejoin="round"/></g>

<!-- FEED ICONS -->
<g fill="none" stroke="#f0f0f0" stroke-width="1.300" stroke-linecap="round"><path d="M64.500,319 Q62,316 62,311.500 Q62,301.500 75,301.500 Q88,301.500 88,311.500 Q88,316 85.500,319"/><path d="M75,304 V306 M67.500,306 L68.700,307.700 M82.500,306 L81.300,307.700 M64.300,311.500 H66.300 M85.700,311.500 H83.700 M65,316.500 L66.800,315.800 M85,316.500 L83.200,315.800"/><path d="M75.500,313 L83,308.500 M71.500,318.500 H78.500"/><circle cx="74.800" cy="313.500" r="1.300" fill="#f0f0f0"/></g>
<g transform="translate(74.800,357)"><use href="#bolt"/></g>
<!-- JOG -->
<g fill="none" stroke="#f0f0f0" stroke-width="1.300"><path d="M74.900,847.500 V870.500 M63.400,859 H86.400 M72,850.500 L74.900,847.300 L77.800,850.500 M72,867.500 L74.900,870.700 L77.800,867.500 M66.400,856.100 L63.200,859 L66.400,861.900 M83.400,856.100 L86.600,859 L83.400,861.900"/></g>
<g fill="none" stroke="#f4f4f4" stroke-width="1.500" stroke-linejoin="miter">
<path d="M198.400,890.500 L207.300,899 H189.500 Z"/><path d="M198.400,980.800 L207.300,972.300 H189.500 Z"/>
<path d="M161.600,897.300 H175.500 L161.600,910.800 Z"/><path d="M235.200,898.800 H221.300 L235.200,912.200 Z"/>
<path d="M161,973 V959.600 L174.600,973 Z"/><path d="M235.300,973 V959.200 L221.800,973 Z"/>
<path d="M153.800,935.600 L161.700,928 V943.300 Z"/><path d="M243.400,935.600 L235.600,928 V943.300 Z"/>
<path d="M273.500,895.300 L283.300,905 H263.700 Z"/><path d="M273.500,975 L283.300,965.200 H263.700 Z"/>
<path d="M315.400,895.300 L325.200,905 H305.600 Z"/><path d="M315.400,975 L325.200,965.200 H305.600 Z"/>
</g>
<g fill="none" stroke="#f0f0f0" stroke-width="1.100"><path d="M265,931.600 L273.500,923 L282,931.600 M265,938.600 L273.500,947.200 L282,938.600"/><path d="M306.900,931.600 L315.400,923 L323.900,931.600 M306.900,938.600 L315.400,947.200 L323.900,938.600"/></g>
<g fill="none" stroke="#a8a8a8" stroke-width="1"><path d="M193.700,918.300 L198.300,914 L202.900,918.300 M193.700,952.700 L198.300,957 L202.900,952.700 M181.200,931 L177,935.500 L181.200,940 M215.400,931 L219.600,935.500 L215.400,940"/></g>
<!-- OUTPUT ICONS -->
<g transform="translate(452,733.500) rotate(45)"><path d="M-3.600,-9 H3.600 V-7.300 H2.600 V-1.600 Q5.800,-.6 5.800,2.200 H-5.800 Q-5.800,-.6 -2.600,-1.600 V-7.300 H-3.600 Z" fill="#fff"/><path d="M0,2.200 V10.500" stroke="#fff" stroke-width="1.400"/></g>
<g fill="none" stroke="#f0f0f0" stroke-width="1.200"><path d="M508.500,727 H504.300 V741.300 H513.500 M509,725.800 H515.500 V728.500 H509 Z M516,727 H519.700 V741.300 H516"/><path d="M512.400,729.500 V742.500 M516.400,729.500 V742.500" stroke-dasharray="1.200 1"/><path d="M520.900,731 V742.500" stroke-dasharray="1 1.200" stroke-width=".8"/></g>
<g><path d="M536.300,729 L537.800,741.800 H546.300 L547.800,729 Z" fill="url(#hatch2)" stroke="#f0f0f0" stroke-width=".9"/><path d="M535,728.300 H549" stroke="#f0f0f0" stroke-width="1.500"/></g>
<!-- LEDS -->
<defs><pattern id="hatch2" width="2.200" height="2.200" patternUnits="userSpaceOnUse"><rect width="2.200" height="2.200" fill="#dcdcdc"/><rect x=".6" y=".6" width="1.100" height="1.100" fill="#1f2a31"/></pattern>
<linearGradient id="lg" x1="0" y1="0" x2="0" y2="1"><stop offset="0" stop-color="#70ffc0"/><stop offset=".45" stop-color="#22e890"/><stop offset="1" stop-color="#70ffc0"/></linearGradient>
<linearGradient id="lr" x1="0" y1="0" x2="0" y2="1"><stop offset="0" stop-color="#e86a6a"/><stop offset=".45" stop-color="#c62626"/><stop offset="1" stop-color="#e47474"/></linearGradient>
<linearGradient id="lgd" x1="0" y1="0" x2="0" y2="1"><stop offset="0" stop-color="#64b064"/><stop offset=".42" stop-color="#0a6c0a"/><stop offset="1" stop-color="#5cae5c"/></linearGradient>
</defs>
<circle cx="394.800" cy="465.800" r="7.800" fill="url(#lg)" stroke="#1a3a2a" stroke-width=".6"/>
<circle cx="394.800" cy="501.800" r="7.800" fill="url(#lr)" stroke="#3a1a1a" stroke-width=".6"/>
<circle cx="10.900" cy="1018.900" r="8.600" fill="url(#lgd)"/><circle cx="32" cy="1018.900" r="8.600" fill="url(#lr)"/><circle cx="1906.800" cy="1018.900" r="9.600" fill="url(#lgd)"/>
</svg>

<div class="t" style="left:13px;width:20px;text-align:center;top:132.6px;font-size:10.5px;color:#f0f0f0;letter-spacing:.3px">XY</div>
<div class="t" style="left:8px;width:30px;text-align:center;top:175.6px;font-size:8.6px;font-weight:bold;color:#f0f0f0;font-family:'DejaVu Sans Mono',monospace;letter-spacing:-.6px">G28</div>
<div class="t" style="left:8px;width:30px;text-align:center;top:217.6px;font-size:8.6px;font-weight:bold;color:#f0f0f0;font-family:'DejaVu Sans Mono',monospace;letter-spacing:-.6px">G30</div>
<div class="t" style="left:8.8px;width:20px;text-align:center;top:308.3px;font-size:10.5px;color:#f0f0f0;letter-spacing:-.4px">XY</div>
<div class="t" style="left:8.8px;width:20px;text-align:center;top:350.3px;font-size:11px;color:#f0f0f0">Z</div>
<div class="t" style="left:384.8px;width:20px;text-align:center;top:460.6px;font-size:10.5px;color:#0a7a40">P6</div>
<div class="t" style="left:384.8px;width:20px;text-align:center;top:496.6px;font-size:10.5px;color:#5a0e0e">P2</div>
<div class="t" style="left:.9px;width:20px;text-align:center;top:1013.6px;font-size:11px;letter-spacing:.3px;color:#064a06">SL</div>
<div class="t" style="left:22px;width:20px;text-align:center;top:1013.6px;font-size:11px;letter-spacing:.3px;color:#5e1212">LM</div>
<div class="t" style="left:1896.8px;width:20px;text-align:center;top:1012.4px;font-size:13px;color:#053e05">S</div>
<div class="abs" style="left:749px;top:256.5px;width:422px;height:519.5px;background:#041604;border:2px solid #0a3c0a;border-top-width:1.5px;box-shadow:0 0 9px rgba(0,0,0,.4)"></div>
<div class="abs" style="left:750px;top:278px;width:420px;height:497px;border:1px solid #0c400c;border-radius:8px 8px 5px 5px"></div>
<div class="t" style="left:760px;top:261.5px;font-size:13px;font-weight:bold;color:#b4b4b4">Enable Laser Mode</div>
<div class="sep" style="left:754px;width:412px;top:306px;background:#0d3e0d"></div>
<div class="t" style="left:767px;top:316.6px;font-size:12px;font-weight:bold;color:#00b7ff;word-spacing:.8px">Engage Laser Mode Settings</div>
<div class="t" style="left:809px;top:693.2px;font-size:11.85px;font-weight:bold;color:#ffa500">&lt;&lt;&lt; Laser Mode Has Been Enabled &gt;&gt;&gt;</div>
<div class="t" style="left:929px;top:735.1px;font-size:11.75px;font-weight:bold;color:#ffa500">Press OK to begin procedure</div>
<svg width="1920" height="1032"><path d="M1148.5,293.5 L1153,298.8 L1161.5,287" fill="none" stroke="#fff" stroke-width="1.7" stroke-linecap="round" stroke-linejoin="round"/></svg>

<svg width="350" height="350" viewBox="0 0 350 350" style="left:784px;top:335px;overflow:hidden">
<defs>
<linearGradient id="gBg" x1="0" y1="0" x2="0" y2="1"><stop offset="0" stop-color="#6e7a87"/><stop offset=".65" stop-color="#64707f"/></linearGradient>
<linearGradient id="gPlateL" x1="0" y1="0" x2="1" y2="0"><stop offset="0" stop-color="#1d2f54"/><stop offset=".45" stop-color="#2a4272"/><stop offset=".7" stop-color="#45659a"/><stop offset=".85" stop-color="#2d4878"/><stop offset="1" stop-color="#1a2a4c"/></linearGradient>
<linearGradient id="gPlateR" x1="0" y1="0" x2="1" y2="0"><stop offset="0" stop-color="#1c2d52"/><stop offset=".45" stop-color="#2a4374"/><stop offset=".75" stop-color="#4a6ca2"/><stop offset="1" stop-color="#2a4374"/></linearGradient>
<linearGradient id="gBody" x1="0" y1="0" x2="1" y2="0"><stop offset="0" stop-color="#343c4e"/><stop offset=".12" stop-color="#505c74"/><stop offset=".4" stop-color="#56627a"/><stop offset=".62" stop-color="#6c7892"/><stop offset=".85" stop-color="#8c98b0"/><stop offset="1" stop-color="#667288"/></linearGradient>
<linearGradient id="gShaft" x1="0" y1="0" x2="1" y2="0"><stop offset="0" stop-color="#3e485c"/><stop offset=".35" stop-color="#5e6a82"/><stop offset=".72" stop-color="#8e9ab2"/><stop offset="1" stop-color="#56627a"/></linearGradient>
<linearGradient id="gFl" x1="0" y1="0" x2="1" y2="0"><stop offset="0" stop-color="#3a3560"/><stop offset=".5" stop-color="#7a6ea0"/><stop offset="1" stop-color="#4a4272"/></linearGradient>
<linearGradient id="gNoz" x1="0" y1="0" x2="0" y2="1"><stop offset="0" stop-color="#d858c0"/><stop offset=".4" stop-color="#f67cd8"/><stop offset="1" stop-color="#ffd4f6"/></linearGradient>
<linearGradient id="gTop" x1="0" y1="0" x2="1" y2="0"><stop offset="0" stop-color="#eca076"/><stop offset=".5" stop-color="#f1a67a"/><stop offset="1" stop-color="#f1aa72"/></linearGradient>
<linearGradient id="gLf" x1="0" y1="0" x2="1" y2="0"><stop offset="0" stop-color="#c87a48"/><stop offset="1" stop-color="#b06236"/></linearGradient>
<linearGradient id="gRf" x1="0" y1="0" x2="1" y2="0"><stop offset="0" stop-color="#d27c48"/><stop offset="1" stop-color="#dc8a54"/></linearGradient>
<radialGradient id="gBlue"><stop offset="0" stop-color="#20d0ff"/><stop offset=".22" stop-color="#0c6cff"/><stop offset=".5" stop-color="#0a48f0" stop-opacity=".8"/><stop offset="1" stop-color="#2050c0" stop-opacity="0"/></radialGradient>
<radialGradient id="gHaze"><stop offset="0" stop-color="#3868d8" stop-opacity=".6"/><stop offset="1" stop-color="#3868d8" stop-opacity="0"/></radialGradient>
<radialGradient id="gMag"><stop offset="0" stop-color="#fff0ff"/><stop offset=".35" stop-color="#f8c0fa" stop-opacity=".95"/><stop offset=".62" stop-color="#f29ae6" stop-opacity=".7"/><stop offset="1" stop-color="#f098b8" stop-opacity="0"/></radialGradient>
<radialGradient id="gStreak"><stop offset="0" stop-color="#b8c4ff" stop-opacity=".95"/><stop offset=".6" stop-color="#a0a0ff" stop-opacity=".55"/><stop offset="1" stop-color="#c0a0ff" stop-opacity="0"/></radialGradient>
<clipPath id="cTop"><polygon points="23,241.5 264,226.7 350,242.4 350,278 150.6,301.5"/></clipPath>
<filter id="b2"><feGaussianBlur stdDeviation="2"/></filter>
<filter id="b3" x="-50%" y="-50%" width="200%" height="200%"><feGaussianBlur stdDeviation="4.500"/></filter>
<filter id="b1"><feGaussianBlur stdDeviation=".8"/></filter>
</defs>
<rect width="350" height="350" fill="url(#gBg)"/>
<!-- table -->
<polygon points="0,220.5 176,213.5 350,213 350,350 0,350" fill="#2b4471"/>
<polygon points="0,220.5 176,213.5 350,213 350,217 176,217.5 0,225" fill="#3d5a8c"/>
<g stroke="#101a32" fill="none">
<path d="M30,224 L75,240" stroke-width="3"/><path d="M62,222 L120,238" stroke-width="3"/><path d="M100,220 L150,232" stroke-width="2.5"/>
<path d="M0,232 L23,243" stroke-width="2"/><path d="M0,257 L124,350" stroke-width="1.6"/>
<path d="M0,272 L98,350" stroke-width="1.2"/>
<path d="M182,334 L200,350" stroke-width="3"/><path d="M227,327 L268,350" stroke-width="2.5"/><path d="M268,321 L322,350" stroke-width="2.5"/><path d="M305,315 L350,338" stroke-width="2.5"/><path d="M336,311 L350,318" stroke-width="2"/>
</g>
<polygon points="0,282 0,301 41,350 66,350" fill="#161c36"/>
<polygon points="0,262 18,262 23,260 23,266 0,266" fill="#141c34"/>
<!-- upright base -->
<path d="M245,168 Q240,196 231,204 L225,207.5 L225,213 L350,231 L350,168 Z" fill="#1b2a4a"/>
<path d="M225,213 L350,231 L350,236 L225,217 Z" fill="#16223e"/>
<polygon points="334,168 350,200 350,168" fill="#3a5a92"/>
<!-- between plates -->
<rect x="120" y="28" width="86" height="152" fill="#1f3156"/><rect x="176" y="0" width="10" height="75" fill="#16223e"/><rect x="126" y="72" width="10" height="106" fill="#15213c"/><rect x="198" y="72" width="5" height="106" fill="#15213c"/>
<!-- back plate & arm -->
<path d="M67.7,63 L73,47 L78,44 L73,12.5 L78,2 L83,0 L176,0 L176,12 L126,48 L126,70 L101,66 Z" fill="#233860" stroke="#5a78a8" stroke-width=".8"/>
<path d="M83.4,0 L134,0 L130.5,9 L121.8,12.5 L104.3,14.3 L102.6,21.3 L93.9,23 L90.4,16 L83.4,5.6 Z" fill="#262a35"/>
<polygon points="104,14 122,12.5 109,23" fill="#6a7684"/>
<!-- left beam -->
<polygon points="0,57.6 101,66 101,82.5 0,79.7" fill="#27406c"/>
<path d="M0,58.4 L101,66.8" stroke="#3f5c8c" stroke-width="1.6"/>
<path d="M0,66 L101,73" stroke="#1a2c50" stroke-width="1.2"/>
<path d="M0,70 L101,76.5" stroke="#34507f" stroke-width="2"/>
<path d="M0,76.5 L101,80.5" stroke="#8a3c72" stroke-width="1.4"/>
<polygon points="0,79.7 101,82.5 101,150 0,150" fill="#223559"/>
<g stroke="#0d1730" stroke-width="1.3"><path d="M13.6,80 V150"/><path d="M31,80.5 V150"/><path d="M46.8,81 V150"/><path d="M63.4,81.5 V150"/><path d="M78.2,82 V150"/><path d="M93,82.3 V150"/></g>
<g fill="#2b416c"><rect x="15" y="82" width="7" height="68"/><rect x="32.5" y="82" width="7" height="68"/><rect x="48.3" y="82.5" width="7" height="67.5"/><rect x="65" y="83" width="6" height="67"/></g>
<rect x="0" y="150" width="101" height="26" fill="#2a4472"/>
<rect x="0" y="151.5" width="101" height="5.5" fill="#33507f"/>
<rect x="0" y="159.5" width="101" height="1.5" fill="#131f3c"/>
<rect x="0" y="161" width="101" height="4" fill="#2f4b7c"/>
<rect x="0" y="167" width="101" height="1.6" fill="#94407a"/>
<rect x="0" y="169" width="101" height="4" fill="#1e2f56"/>
<rect x="0" y="173" width="101" height="3" fill="#15213f"/>
<!-- right beam -->
<polygon points="297,79 322,74.5 333,74.5 333,86" fill="#1e3054"/>
<polygon points="221.5,74.4 331.5,84 331.5,97 221.5,93.6" fill="#35558c"/>
<path d="M221.5,75.3 L331.5,84.8" stroke="#6688ba" stroke-width="1.5"/>
<path d="M221.5,80 L331.5,88.5" stroke="#1f3358" stroke-width="1.2"/>
<path d="M221.5,84.5 L331.5,91.5" stroke="#5878ac" stroke-width="2.2"/>
<path d="M221.5,90.5 L331.5,95.5" stroke="#6e4c84" stroke-width="1.2"/>
<polygon points="221.5,93.6 331.5,97 331.5,152 221.5,152" fill="#2a4069"/>
<polygon points="316,96.5 331.5,97 331.5,152 316,152" fill="#1d2f54"/>
<g stroke="#0f1a34" stroke-width="1.2"><path d="M224,94 V152"/><path d="M235.4,94.2 V152"/><path d="M246.7,94.5 V152"/><path d="M258,95 V152"/><path d="M269.4,95.3 V152"/><path d="M280.8,95.6 V152"/><path d="M292,96 V152"/><path d="M302.6,96.3 V152"/><path d="M312,96.6 V152"/></g>
<rect x="221.5" y="152" width="110" height="17.5" fill="#34538a"/>
<rect x="221.5" y="153" width="110" height="4.5" fill="#4a6ba0"/>
<rect x="221.5" y="158.5" width="110" height="1.3" fill="#182746"/>
<rect x="221.5" y="160" width="110" height="5" fill="#4262a0"/>
<rect x="221.5" y="166" width="110" height="1.2" fill="#5e4a80"/>
<rect x="221.5" y="167.5" width="110" height="2.5" fill="#15213f"/>
<!-- right upright -->
<path d="M331.5,176 V80 Q331.5,74.5 337,74.5 H343 Q350,75 350,84 V176 Z" fill="#3f5e97"/>
<path d="M345,76 Q350,78 350,86 V176 H347 V86 Q347,79 345,76Z" fill="#2a4272"/>
<!-- plates -->
<rect x="100.5" y="27.5" width="25.5" height="151" rx="12" fill="url(#gPlateL)" stroke="#0e1830" stroke-width=".8"/>
<ellipse cx="103.2" cy="50" rx="2.6" ry="8.5" fill="#0e1830" stroke="#3a5586" stroke-width=".7"/>
<ellipse cx="104.5" cy="133" rx="1.6" ry="5.5" fill="#0e1830" stroke="#b06080" stroke-width=".7"/>
<rect x="201.5" y="34" width="20.5" height="144.5" rx="10" fill="url(#gPlateR)" stroke="#0e1830" stroke-width=".8"/>
<!-- hose -->
<path d="M181,0 H202.500 Q203,40 199.500,73 H185 Q186.500,40 181,0Z" fill="#20232c"/>
<g stroke="#3e424e" stroke-width=".8" fill="none"><path d="M184,6 Q194,9 203,6"/><path d="M184.3,12 Q194,15 203,12"/><path d="M184.6,18 Q194,21 202.8,18"/><path d="M185,24 Q194,27 202.6,24"/><path d="M185.3,30 Q194,33 202.3,30"/><path d="M185.6,36 Q194,39 202,36"/><path d="M186,42 Q194,45 201.8,42"/><path d="M186.3,48 Q194,51 201.5,48"/><path d="M186.6,54 Q194,57 201.2,54"/><path d="M187,60 Q194,63 200.8,60"/><path d="M187.2,66 Q194,69 200.4,66"/></g>
<!-- spindle -->
<rect x="158.7" y="4" width="17.6" height="34" rx="2" fill="url(#gShaft)" stroke="#1a1d26" stroke-width=".7"/>
<rect x="154.3" y="29" width="27" height="13.5" rx="2" fill="url(#gShaft)" stroke="#1a1d26" stroke-width=".7"/>
<rect x="133.400" y="50" width="20" height="14" rx="5" fill="#3e4658" stroke="#14161d" stroke-width=".7"/><rect x="135" y="60" width="16" height="3" rx="1.500" fill="#6a3448" opacity=".8"/>
<rect x="151" y="41" width="32" height="33" rx="2" fill="url(#gBody)" stroke="#1a1d26" stroke-width=".7"/>
<rect x="135" y="73" width="63.4" height="71.5" rx="3" fill="url(#gBody)" stroke="#1a1d26" stroke-width=".7"/>
<path d="M136,77 Q136,74 139,74 H195.400 Q198.400,74 198.400,77 V84.500 Q167,88.500 136,84.500 Z" fill="#8c98b0" opacity=".8"/><path d="M136,84.500 Q167,88.500 198.400,84.500" stroke="#2a3040" stroke-width=".8" fill="none"/>
<path d="M135,125 Q167,130 198.4,125" stroke="#23262f" stroke-width=".8" fill="none"/>
<rect x="139" y="144" width="54.3" height="8.5" fill="url(#gBody)" stroke="#1a1d26" stroke-width=".6"/>
<rect x="139" y="145.5" width="54.3" height="1.6" fill="#e04a8c"/>
<rect x="142" y="152.5" width="48" height="10.5" fill="url(#gBody)" stroke="#1a1d26" stroke-width=".6"/>
<rect x="142" y="158.6" width="48" height="1.6" fill="#e04a8c"/>
<rect x="142.4" y="163" width="45.8" height="17" fill="url(#gBody)" stroke="#1a1d26" stroke-width=".6"/>
<path d="M131.6,152 V72.5 Q131.6,69.5 134.6,69.5 H197.5 Q200.5,69.5 200.5,72.5 V152" stroke="#a3a9ba" stroke-width="1.1" fill="none"/>
<g fill="#c8ccd8" stroke="#30343f" stroke-width=".5"><circle cx="137" cy="72" r="1.8"/><circle cx="196" cy="72" r="1.8"/><circle cx="126.5" cy="117.5" r="1.8"/><circle cx="203.5" cy="120" r="1.8"/><circle cx="139" cy="152.5" r="2"/><circle cx="196.5" cy="153.5" r="2"/></g>
<!-- pink bracket -->
<path d="M100,170 H146 V178 L128,180 L122,184.5 L115,184 L112,178.5 L100,176 Z" fill="#2b2a58"/>
<path d="M112,178.5 L115,184 L122,184.5 L128,180 L146,178" stroke="#e8528e" stroke-width="1.5" fill="none"/>
<path d="M190,168 H206 V176 L196,178 L190,176Z" fill="#2b2a58"/><path d="M192,177 L204,175" stroke="#e8528e" stroke-width="1.5"/>
<!-- flange + nozzle -->
<rect x="139" y="178" width="51" height="15.5" rx="3" fill="url(#gFl)" stroke="#1c1a30" stroke-width=".7"/>
<rect x="139.500" y="188.500" width="50" height="4" fill="#e246a4"/>
<path d="M148,193.500 H180.500 Q181,200 173,204.300 H156 Q148,200 148,193.500Z" fill="url(#gNoz)" stroke="#5a2a70" stroke-width=".6"/><ellipse cx="164.500" cy="201.600" rx="9" ry="2.200" fill="#fff" opacity=".9"/>
<path d="M156.600,204 H171.400 L169.500,209 Q164.500,211.500 159.500,209 Z" fill="#8a50b8" stroke="#3a2060" stroke-width=".5"/><path d="M159.500,208.500 Q164.500,211.500 169.500,208.500 L168,211 H161 Z" fill="#fff"/>
<!-- glows -->
<ellipse cx="164.5" cy="214" rx="52" ry="34" fill="url(#gHaze)"/>
<ellipse cx="164.5" cy="228" rx="40" ry="22" fill="url(#gBlue)"/>
<g clip-path="url(#cTop)">
<polygon points="23,241.5 264,226.7 350,242.4 350,278 150.6,301.5" fill="url(#gTop)"/>
<g stroke="#e08e5c" stroke-width=".5" opacity=".6"><path d="M60,246 L300,240"/><path d="M80,256 L340,252"/><path d="M110,270 L350,262"/><path d="M135,284 L350,270"/></g>
<ellipse cx="165" cy="251" rx="104" ry="46" fill="url(#gMag)"/>
<path d="M140,250 Q158,262 156,298 H173 Q171,262 189,250 Z" fill="#cfc8ff" filter="url(#b3)"/>
<ellipse cx="164.500" cy="247" rx="50" ry="14" fill="#fff" filter="url(#b3)"/>
<ellipse cx="164.500" cy="247" rx="34" ry="10" fill="#fff" filter="url(#b2)"/>
<path d="M150,250 Q162,260 160.500,286 H168.500 Q167,260 179,250 Z" fill="#f0f4ff" filter="url(#b2)"/>
<ellipse cx="164.500" cy="245.800" rx="10" ry="2.600" fill="none" stroke="#a8ecff" stroke-width="1.400" opacity=".5" filter="url(#b1)"/>
</g>
<polygon points="23,241.5 150.6,301.5 150.6,336.5 23,260" fill="url(#gLf)"/>
<polygon points="150.6,301.5 350,278 350,307.5 150.6,336.5" fill="url(#gRf)"/>
<path d="M23,241.5 L150.6,301.5 L350,278" stroke="#ffd3a8" stroke-width=".9" fill="none" opacity=".8"/>
<path d="M150.6,301.5 V336.5" stroke="#7a3c1c" stroke-width=".8"/>
<polygon points="23,260 150.6,336.5 350,307.5 350,312.5 150.6,342 18,262.5" fill="#0f172e"/>
<!-- beam -->
<polygon points="160,211 169,211 165.400,241 163.600,241" fill="#8fe4ff" filter="url(#b1)"/>
<polygon points="161.300,211 167.700,211 165,240 164,240" fill="#ffffff"/>
</svg>


</div>
</body>
</html>
